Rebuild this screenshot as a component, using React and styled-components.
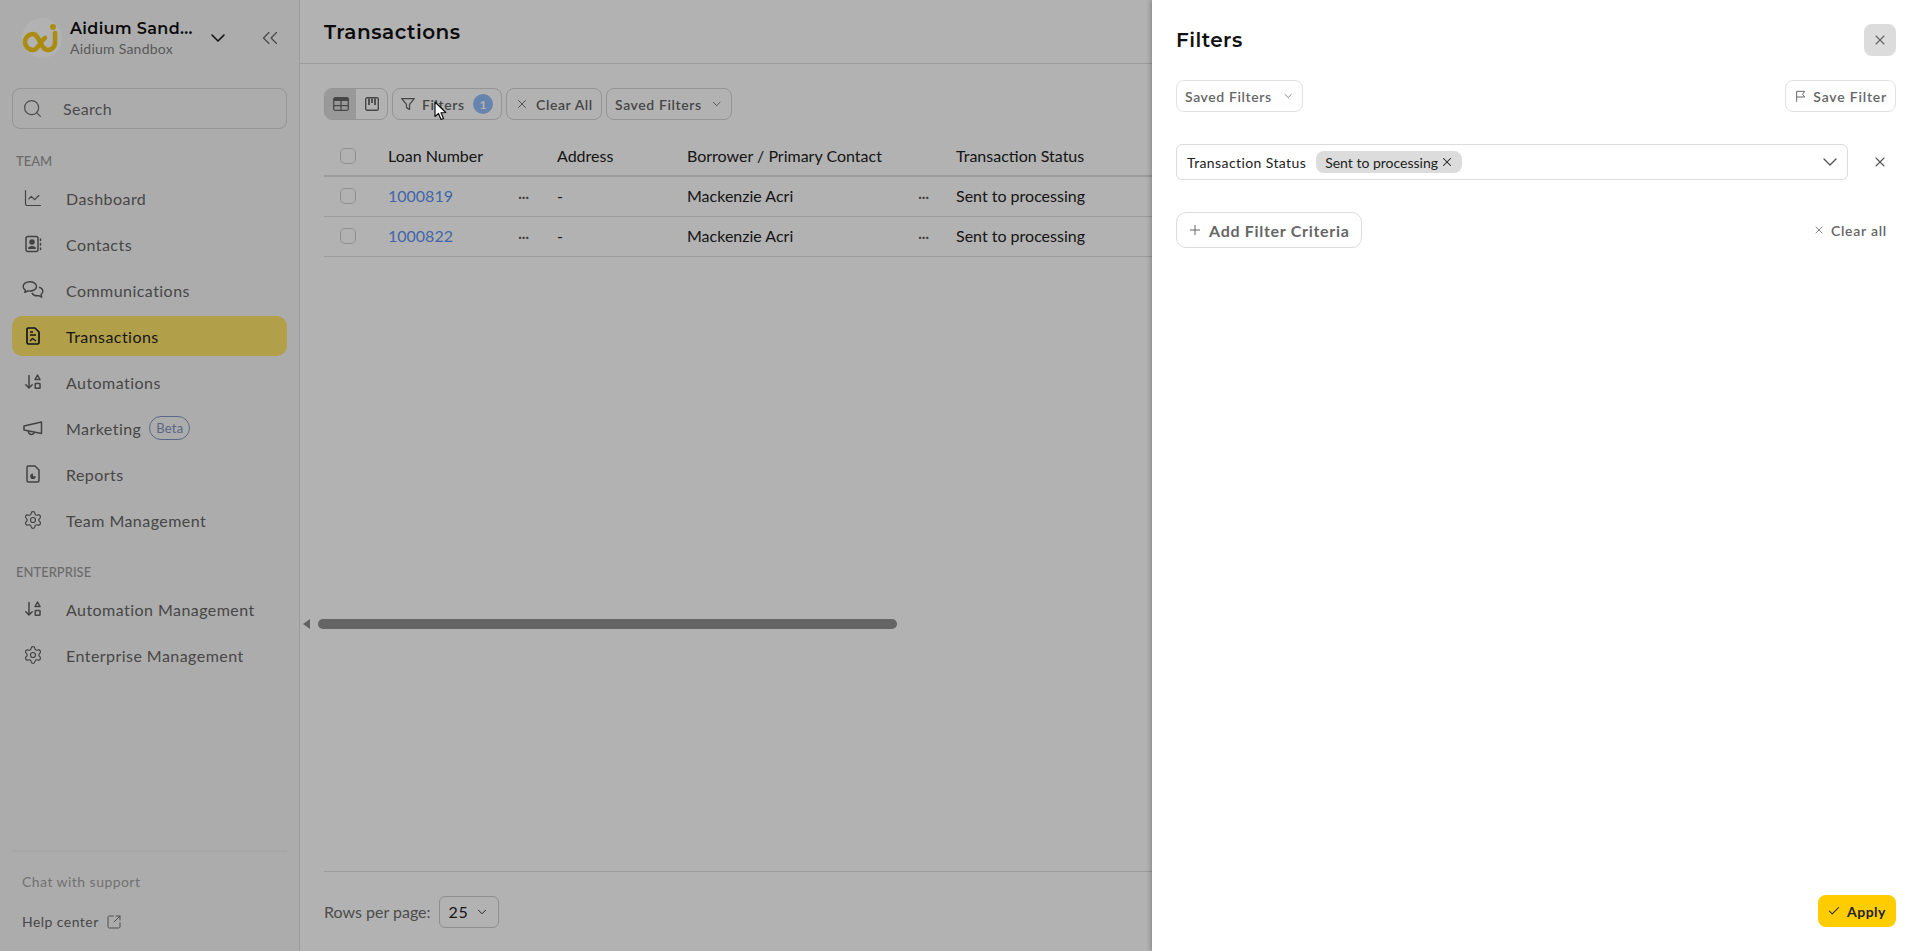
import React from 'react';
import styled, { createGlobalStyle } from 'styled-components';
import { Search, ChartLine, ChevronDown, ChevronsLeft, Settings, X, Plus, Check, SquareArrowOutUpRight } from 'lucide-react';

const GlobalStyle = createGlobalStyle`
  html, body { margin: 0; padding: 0; height: 100%; }
  body { font-family: Lato, "Liberation Sans", sans-serif; color: #2b2b2b; background: #fff; }
  * { box-sizing: border-box; }
`;

const Page = styled.div`
  position: relative;
  display: flex;
  width: 100%;
  height: 100vh;
  overflow: hidden;
`;

const Sidebar = styled.aside`
  width: 300px;
  flex: none;
  display: flex;
  flex-direction: column;
  background: #f7f7f7;
  border-right: 1px solid #dedede;
`;

const SideHeader = styled.div`
  height: 88px;
  padding: 18px 0 0 22px;
  display: flex;
  align-items: flex-start;
`;

const LogoWrap = styled.div`
  width: 40px;
  height: 40px;
  flex: none;
  border-radius: 50%;
  background: #fff;
`;

const OrgText = styled.div`
  margin-left: 8px;
  width: 124px;
  margin-top: 1px;
`;

const OrgName = styled.div`
  font-family: Montserrat, Inter, sans-serif;
  font-size: 16px;
  font-weight: 600;
  line-height: 20px;
  letter-spacing: 0.35px;
  color: #111;
  white-space: nowrap;
`;

const OrgSub = styled.div`
  font-size: 14px;
  line-height: 18px;
  margin-top: 1px;
  letter-spacing: 0.25px;
  color: #808080;
`;

const OrgChevron = styled.div`
  margin: 8px 0 0 12px;
  width: 24px;
  height: 24px;
  color: #1a1a1a;
`;

const CollapseBtn = styled.div`
  margin: 7px 0 0 27px;
  width: 24px;
  height: 24px;
  color: #6b6b6b;
`;

const SearchBox = styled.div`
  margin: 0 12px;
  width: 275px;
  height: 41px;
  flex: none;
  border: 1px solid #d4d4d4;
  border-radius: 8px;
  display: flex;
  align-items: center;
  padding-left: 9px;
  gap: 20px;
  color: #6e6e6e;
  font-size: 16px;
  letter-spacing: 0.3px;
`;

const SectionLabel = styled.div`
  margin: ${p => p.$top}px 0 9px 16px;
  font-size: 13px;
  line-height: 16px;
  font-weight: 500;
  color: #9a9a9a;
`;

const NavList = styled.nav`
  display: flex;
  flex-direction: column;
  gap: 6px;
`;

const NavItem = styled.div`
  margin: 0 12px;
  width: 275px;
  height: 40px;
  display: flex;
  align-items: center;
  padding-left: 11px;
  border-radius: 10px;
  font-size: 16px;
  letter-spacing: 0.45px;
  color: ${p => (p.$active ? '#1f1f1f' : '#666')};
  background: ${p => (p.$active ? '#ffe46b' : 'transparent')};
`;

const NavIcon = styled.span`
  width: 20px;
  height: 20px;
  margin-right: 23px;
  display: flex;
  align-items: center;
  justify-content: center;
  color: ${p => (p.$active ? '#1f1f1f' : '#5f5f5f')};
`;

const BetaTag = styled.span`
  margin-left: 8px;
  height: 24px;
  padding: 0 6px;
  display: inline-flex;
  align-items: center;
  border: 1px solid #8096c0;
  border-radius: 12px;
  font-size: 13px;
  letter-spacing: 0.2px;
  color: #7e93bd;
`;

const SideFooter = styled.div`
  margin-top: auto;
  height: 101px;
  display: flex;
  flex-direction: column;
`;

const FooterRule = styled.div`
  margin-left: 12px;
  width: 275px;
  height: 2px;
  background: #efefef;
`;

const ChatLink = styled.div`
  margin: 21px 0 0 22px;
  font-size: 14px;
  line-height: 18px;
  letter-spacing: 0.45px;
  color: #a3a3a3;
`;

const HelpLink = styled.div`
  margin: 22px 0 0 22px;
  display: flex;
  align-items: center;
  gap: 7px;
  font-size: 14px;
  line-height: 18px;
  letter-spacing: 0.45px;
  color: #666;
`;

const Main = styled.main`
  flex: 1;
  min-width: 0;
  display: flex;
  flex-direction: column;
`;

const MainHeader = styled.header`
  height: 64px;
  flex: none;
  padding-left: 24px;
  display: flex;
  align-items: center;
  border-bottom: 1px solid #dedede;
`;

const Title = styled.h1`
  margin: 0;
  font-family: Montserrat, Inter, sans-serif;
  font-size: 20px;
  font-weight: 600;
  letter-spacing: 0.5px;
  color: #111;
`;

const Toolbar = styled.div`
  margin: 24px 24px 0;
  height: 32px;
  flex: none;
  display: flex;
  gap: 4px;
`;

const ViewToggle = styled.div`
  width: 64px;
  height: 32px;
  display: flex;
  border: 1px solid #d4d4d4;
  border-radius: 8px;
  overflow: hidden;
`;

const ToggleCell = styled.div`
  flex: 1;
  display: flex;
  align-items: center;
  justify-content: center;
  color: #666;
  background: ${p => (p.$active ? '#dcdcdc' : 'transparent')};
`;

const ToolButton = styled.div`
  height: 32px;
  width: ${p => p.$w}px;
  display: flex;
  align-items: center;
  padding: 0 8px 0 ${p => p.$left || 8}px;
  gap: ${p => p.$gap || 8}px;
  border: 1px solid ${p => (p.$light ? '#e2e2e2' : '#d4d4d4')};
  border-radius: 8px;
  font-size: 14px;
  font-weight: 600;
  letter-spacing: ${p => p.$spacing || 0.6}px;
  color: #666;
  white-space: nowrap;
`;

const CountBadge = styled.span`
  width: 20px;
  height: 20px;
  margin-left: auto;
  border-radius: 50%;
  background: #94bdfb;
  color: #fff;
  font-size: 12px;
  font-weight: 700;
  display: flex;
  align-items: center;
  justify-content: center;
  letter-spacing: 0;
`;

const TableArea = styled.div`
  margin: 16px 0 0 24px;
  height: 480px;
  flex: none;
  font-size: 16px;
`;

const Row = styled.div`
  display: grid;
  grid-template-columns: 64px 169px 130px 269px 1fr;
  align-items: center;
  height: ${p => (p.$head ? 41 : 40)}px;
  padding-bottom: ${p => (p.$head ? 0 : 2)}px;
  border-bottom: ${p => (p.$head ? 2 : 1)}px solid #dedede;
  color: #222;
`;

const CheckCell = styled.div`
  padding-left: 16px;
  display: flex;
`;

const Box = styled.span`
  width: 16px;
  height: 16px;
  border: 1px solid #cdcdcd;
  border-radius: 5px;
`;

const DotsCell = styled.div`
  display: flex;
  align-items: center;
  justify-content: space-between;
  padding-right: ${p => p.$right}px;
`;

const LoanLink = styled.span`
  color: #5e92f5;
`;

const Dots = styled.span`
  font-size: 15px;
  line-height: 14px;
  font-weight: 700;
  color: #555;
  margin-top: -5px;
`;

const ScrollRow = styled.div`
  margin-top: 3px;
  padding-left: 3px;
  height: 10px;
  flex: none;
  display: flex;
  align-items: center;
  gap: 8px;
`;

const ScrollArrow = styled.span`
  width: 0;
  height: 0;
  border-top: 5px solid transparent;
  border-bottom: 5px solid transparent;
  border-right: 7px solid #8f8f8f;
`;

const ScrollThumb = styled.span`
  width: 579px;
  height: 10px;
  border-radius: 5px;
  background: #909090;
`;

const MainFooter = styled.footer`
  margin: auto 24px 0;
  height: 80px;
  flex: none;
  display: flex;
  align-items: center;
  gap: 8px;
  border-top: 1px solid #dedede;
  font-size: 16px;
  color: #6e6e6e;
`;

const RowsSelect = styled.div`
  width: 60px;
  height: 32px;
  padding-left: 9px;
  gap: 7px;
  display: flex;
  align-items: center;
  border: 1px solid #cdcdcd;
  border-radius: 6px;
  font-size: 16px;
  letter-spacing: 0.6px;
  color: #222;
`;

const Backdrop = styled.div`
  position: absolute;
  inset: 0;
  background: rgba(0, 0, 0, 0.3);
`;

const Drawer = styled.section`
  position: absolute;
  top: 0;
  right: 0;
  bottom: 0;
  width: 768px;
  padding: 24px;
  display: flex;
  flex-direction: column;
  background: #fff;
  box-shadow: -2px 0 4px rgba(0, 0, 0, 0.2);
`;

const DrawerHead = styled.div`
  height: 32px;
  flex: none;
  display: flex;
  align-items: center;
  justify-content: space-between;
`;

const DrawerTitle = styled.h2`
  margin: 0;
  font-family: Montserrat, Inter, sans-serif;
  font-size: 20px;
  font-weight: 600;
  letter-spacing: 0.45px;
  color: #111;
`;

const CloseBtn = styled.div`
  width: 32px;
  height: 32px;
  border-radius: 8px;
  background: #dcdcdc;
  display: flex;
  align-items: center;
  justify-content: center;
  color: #666;
`;

const SavedRow = styled.div`
  margin-top: 24px;
  flex: none;
  display: flex;
  justify-content: space-between;
`;

const CriteriaRow = styled.div`
  margin-top: 32px;
  flex: none;
  display: flex;
  align-items: center;
  gap: 16px;
`;

const CriteriaSelect = styled.div`
  flex: 1;
  height: 36px;
  padding: 0 5px 0 10px;
  display: flex;
  align-items: center;
  border: 1px solid #dcdcdc;
  border-radius: 6px;
  font-size: 14px;
  letter-spacing: 0.4px;
  color: #222;
`;

const Chip = styled.span`
  margin-left: 10px;
  height: 22px;
  padding: 0 8px 0 9px;
  display: inline-flex;
  align-items: center;
  gap: 2px;
  border-radius: 8px;
  background: #dcdcdc;
  letter-spacing: 0;
  white-space: nowrap;
`;

const SelectArrow = styled.span`
  margin-left: auto;
  display: flex;
  color: #555;
`;

const IconOnly = styled.div`
  width: 32px;
  display: flex;
  justify-content: center;
  color: #555;
`;

const AddRow = styled.div`
  margin-top: 32px;
  flex: none;
  display: flex;
  align-items: center;
  justify-content: space-between;
`;

const AddBtn = styled.div`
  width: 186px;
  height: 36px;
  padding-left: 10px;
  gap: 6px;
  display: flex;
  align-items: center;
  border: 1px solid #dcdcdc;
  border-radius: 10px;
  font-size: 16px;
  font-weight: 700;
  letter-spacing: 0.7px;
  color: #666;
`;

const ClearLink = styled.div`
  padding-right: 9px;
  display: flex;
  align-items: center;
  gap: 6px;
  font-size: 14px;
  font-weight: 600;
  letter-spacing: 0.75px;
  color: #666;
`;

const DrawerFoot = styled.div`
  margin-top: auto;
  display: flex;
  justify-content: flex-end;
`;

const ApplyBtn = styled.div`
  width: 78px;
  height: 32px;
  padding-left: 9px;
  gap: 6px;
  display: flex;
  align-items: center;
  border-radius: 8px;
  background: #ffcc00;
  font-size: 14px;
  font-weight: 700;
  letter-spacing: 0.5px;
  color: #222;
`;

const Pointer = styled.svg`
  position: absolute;
  left: 433px;
  top: 100px;
`;

const Stroke = ({ size = 20, width = 1.5, children }) => (
  <svg width={size} height={size} viewBox="0 0 20 20" fill="none" stroke="currentColor" strokeWidth={width} strokeLinecap="round" strokeLinejoin="round">
    {children}
  </svg>
);

const Logo = () => (
  <LogoWrap>
    <svg width="40" height="40" viewBox="0 0 40 40" fill="none">
      <path d="M33 15 V25 a7 7 0 0 1 -7 7 c-4 0 -6 -4 -8 -8 c-2 -4 -4 -8 -7 -8 a8 8 0 0 0 0 16 c3 0 5 -3 7 -6 c2 -3 3 -5 5 -6" stroke="#f6c916" strokeWidth="4.6" strokeLinecap="round" />
      <circle cx="31" cy="9" r="3" fill="#f6c916" />
    </svg>
  </LogoWrap>
);

const ContactsIcon = () => (
  <Stroke>
    <rect x="3" y="2.5" width="12" height="15" rx="2" />
    <circle cx="9" cy="8" r="2" fill="currentColor" />
    <path d="M5.8 14.2 c0.5 -2 5.9 -2 6.4 0 Z" fill="currentColor" />
    <path d="M17.5 5 v1.5 M17.5 9.5 v1.5 M17.5 14 v1.5" />
  </Stroke>
);

const ChatsIcon = () => (
  <svg width="24" height="22" viewBox="0 0 22 20" fill="none" stroke="currentColor" strokeWidth="1.3" strokeLinejoin="round" style={{ flex: 'none' }}>
    <path d="M8 2.5 c-3.6 0 -6 1.9 -6 4.3 c0 1.4 .8 2.6 2 3.3 l-.6 2 l2.8 -1.2 c3.6 .6 8 -1 8 -4.1 c0 -2.4 -2.6 -4.3 -6.2 -4.3 Z" />
    <path d="M16.5 7.5 c2.2 .5 3.5 2 3.5 3.7 c0 1.2 -.6 2.2 -1.6 2.8 l.6 2.6 l-2.8 -1.4 c-2.8 .4 -5.2 -.6 -6.2 -2.6" />
  </svg>
);

const DocIcon = () => (
  <svg width="20" height="20" viewBox="0 0 20 20" fill="none" stroke="currentColor" strokeWidth="1.7" strokeLinejoin="round">
    <path d="M5 2 H12 L16 6 V16.5 a1.5 1.5 0 0 1 -1.5 1.5 H5.5 A1.5 1.5 0 0 1 4 16.5 V3 a1 1 0 0 1 1 -1 Z" />
    <path d="M7 6 H10 M7 9 H13" strokeWidth="1.3" />
    <path d="M7 15 l2.5 -2.5 l3.5 2.5" strokeWidth="1.3" />
  </svg>
);

const SortShapesIcon = () => (
  <Stroke>
    <path d="M6 3.5 V16 M2.8 12.8 L6 16 L9.2 12.8" />
    <path d="M14.5 3 L17 7.5 H12 Z" />
    <rect x="12.2" y="11.5" width="4.8" height="4.8" rx="0.6" />
  </Stroke>
);

const MegaphoneIcon = () => (
  <svg width="22" height="20" viewBox="0 0 22 20" fill="none" stroke="currentColor" strokeWidth="1.5" strokeLinejoin="round" style={{ flex: 'none' }}>
    <path d="M2 8 L19.5 4 V15.5 L2 12 Z" />
    <path d="M6.5 13 a3 3 0 0 0 6 1" />
  </svg>
);

const ReportIcon = () => (
  <Stroke>
    <path d="M5 2 H12 L16 6 V16.5 a1.5 1.5 0 0 1 -1.5 1.5 H5.5 A1.5 1.5 0 0 1 4 16.5 V3 a1 1 0 0 1 1 -1 Z" />
    <path d="M10 9.5 A2.8 2.8 0 1 0 12.8 12.3 H10 Z" fill="currentColor" stroke="none" />
  </Stroke>
);

const TableIcon = () => (
  <svg width="16" height="14" viewBox="0 0 16 14" fill="none" stroke="currentColor" strokeWidth="1.3">
    <rect x="0.7" y="0.7" width="14.6" height="12.6" rx="1.5" />
    <path d="M0.7 2.6 H15.3" strokeWidth="3" />
    <path d="M0.7 8.6 H15.3 M8 4 V13" />
  </svg>
);

const BoardIcon = () => (
  <svg width="14" height="14" viewBox="0 0 14 14" fill="none" stroke="currentColor" strokeWidth="1.4">
    <rect x="0.7" y="0.7" width="12.6" height="12.6" rx="1.5" />
    <path d="M4 1.5 V8 M7 1.5 V6 M10 1.5 V8" strokeWidth="1.8" />
  </svg>
);

const FunnelIcon = () => (
  <Stroke size={18} width={1.4}>
    <path d="M3 4 H17 L11.7 10.5 V16 L8.3 14 V10.5 Z" />
  </Stroke>
);

const FlagIcon = () => (
  <Stroke size={14} width={1.5}>
    <path d="M4 18 V3 H16 L13 7.5 L16 11.5 H4" />
  </Stroke>
);

const navTeam = [
  { label: 'Dashboard', icon: <ChartLine size={20} strokeWidth={1.4} /> },
  { label: 'Contacts', icon: <ContactsIcon /> },
  { label: 'Communications', icon: <ChatsIcon /> },
  { label: 'Transactions', icon: <DocIcon />, active: true },
  { label: 'Automations', icon: <SortShapesIcon /> },
  { label: 'Marketing', icon: <MegaphoneIcon />, beta: true },
  { label: 'Reports', icon: <ReportIcon /> },
  { label: 'Team Management', icon: <Settings size={20} strokeWidth={1.4} /> },
];

const navEnterprise = [
  { label: 'Automation Management', icon: <SortShapesIcon /> },
  { label: 'Enterprise Management', icon: <Settings size={20} strokeWidth={1.4} /> },
];

const loans = ['1000819', '1000822'];

const renderNav = item => (
  <NavItem key={item.label} $active={item.active}>
    <NavIcon $active={item.active}>{item.icon}</NavIcon>
    {item.label}
    {item.beta && <BetaTag>Beta</BetaTag>}
  </NavItem>
);

export default function App() {
  return (
    <Page>
      <GlobalStyle />
      <Sidebar>
        <SideHeader>
          <Logo />
          <OrgText>
            <OrgName>Aidium Sand...</OrgName>
            <OrgSub>Aidium Sandbox</OrgSub>
          </OrgText>
          <OrgChevron><ChevronDown size={24} strokeWidth={1.6} /></OrgChevron>
          <CollapseBtn><ChevronsLeft size={26} strokeWidth={1.2} /></CollapseBtn>
        </SideHeader>
        <SearchBox>
          <Search size={21} strokeWidth={1.4} />
          <span>Search</span>
        </SearchBox>
        <SectionLabel $top={24}>TEAM</SectionLabel>
        <NavList>{navTeam.map(renderNav)}</NavList>
        <SectionLabel $top={24}>ENTERPRISE</SectionLabel>
        <NavList>{navEnterprise.map(renderNav)}</NavList>
        <SideFooter>
          <FooterRule />
          <ChatLink>Chat with support</ChatLink>
          <HelpLink>
            Help center
            <SquareArrowOutUpRight size={16} strokeWidth={1.4} />
          </HelpLink>
        </SideFooter>
      </Sidebar>

      <Main>
        <MainHeader>
          <Title>Transactions</Title>
        </MainHeader>
        <Toolbar>
          <ViewToggle>
            <ToggleCell $active><TableIcon /></ToggleCell>
            <ToggleCell><BoardIcon /></ToggleCell>
          </ViewToggle>
          <ToolButton $w={110} $gap={5} $left={6}>
            <FunnelIcon />
            <span>Filters</span>
            <CountBadge>1</CountBadge>
          </ToolButton>
          <ToolButton $w={96} $gap={7}>
            <X size={14} strokeWidth={1.5} />
            Clear All
          </ToolButton>
          <ToolButton $w={126}>
            Saved Filters
            <ChevronDown size={16} strokeWidth={1.5} />
          </ToolButton>
        </Toolbar>
        <TableArea>
          <Row $head>
            <CheckCell><Box /></CheckCell>
            <div>Loan Number</div>
            <div>Address</div>
            <div>Borrower / Primary Contact</div>
            <div>Transaction Status</div>
          </Row>
          {loans.map(loan => (
            <Row key={loan}>
              <CheckCell><Box /></CheckCell>
              <DotsCell $right={28}>
                <LoanLink>{loan}</LoanLink>
                <Dots>...</Dots>
              </DotsCell>
              <div>-</div>
              <DotsCell $right={27}>
                Mackenzie Acri
                <Dots>...</Dots>
              </DotsCell>
              <div>Sent to processing</div>
            </Row>
          ))}
        </TableArea>
        <ScrollRow>
          <ScrollArrow />
          <ScrollThumb />
        </ScrollRow>
        <MainFooter>
          Rows per page:
          <RowsSelect>
            25
            <ChevronDown size={14} strokeWidth={1.6} />
          </RowsSelect>
        </MainFooter>
      </Main>

      <Backdrop />

      <Drawer>
        <DrawerHead>
          <DrawerTitle>Filters</DrawerTitle>
          <CloseBtn><X size={16} strokeWidth={1.6} /></CloseBtn>
        </DrawerHead>
        <SavedRow>
          <ToolButton $w={127} $gap={10} $light>
            Saved Filters
            <ChevronDown size={16} strokeWidth={1.5} />
          </ToolButton>
          <ToolButton $w={111} $gap={6} $spacing={0.8} $light>
            <FlagIcon />
            Save Filter
          </ToolButton>
        </SavedRow>
        <CriteriaRow>
          <CriteriaSelect>
            Transaction Status
            <Chip>
              Sent to processing
              <X size={14} strokeWidth={1.8} />
            </Chip>
            <SelectArrow><ChevronDown size={24} strokeWidth={1.4} /></SelectArrow>
          </CriteriaSelect>
          <IconOnly><X size={16} strokeWidth={1.6} /></IconOnly>
        </CriteriaRow>
        <AddRow>
          <AddBtn>
            <Plus size={16} strokeWidth={1.5} />
            Add Filter Criteria
          </AddBtn>
          <ClearLink>
            <X size={12} strokeWidth={1.6} />
            Clear all
          </ClearLink>
        </AddRow>
        <DrawerFoot>
          <ApplyBtn>
            <Check size={14} strokeWidth={1.8} />
            Apply
          </ApplyBtn>
        </DrawerFoot>
      </Drawer>

      <Pointer width="16" height="22" viewBox="0 0 16 22">
        <path d="M2 2 V16.5 L5.5 13.5 L8 19.5 L10.5 18.5 L8 12.8 L12.8 12.5 Z" fill="#fff" stroke="#111" strokeWidth="1.2" strokeLinejoin="round" />
      </Pointer>
    </Page>
  );
}
